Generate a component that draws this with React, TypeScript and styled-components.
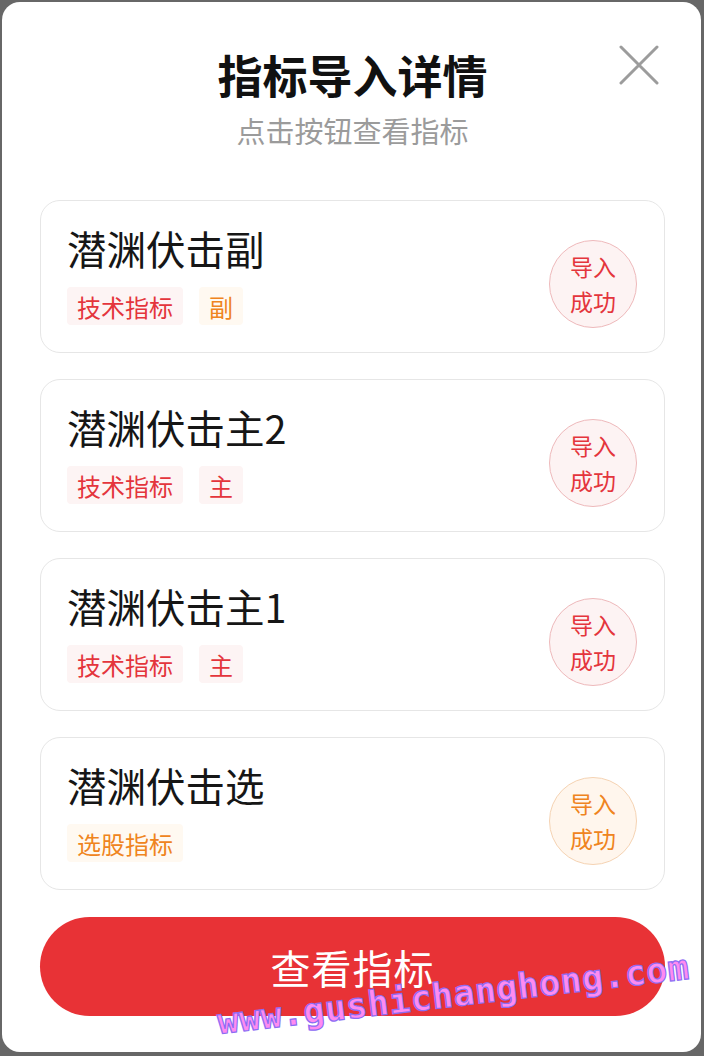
import React from 'react';
import styled, { createGlobalStyle } from 'styled-components';

const GlobalStyle = createGlobalStyle`
    html, body {
        margin: 0;
        padding: 0;
        background: #676767;
    }
    body {
        font-family: "Noto Sans CJK SC", "Noto Sans", sans-serif;
    }
`;

const Backdrop = styled.div`
    width: 704px;
    height: 1056px;
    padding: 2px 3px 4px 2px;
    box-sizing: border-box;
`;

const Modal = styled.div`
    position: relative;
    height: 100%;
    background: #ffffff;
    border-radius: 18px;
    padding: 46px 36px 35px 38px;
    box-sizing: border-box;
    display: flex;
    flex-direction: column;
    overflow: hidden;
`;

const Header = styled.div`
    display: flex;
    flex-direction: column;
    align-items: center;
    margin-bottom: 51px;
`;

const Title = styled.h1`
    margin: 0;
    font-size: 45px;
    line-height: 54px;
    font-weight: 700;
    color: #111111;
`;

const Subtitle = styled.p`
    margin: 9px 0 0;
    font-size: 29px;
    line-height: 38px;
    color: #9b9b9b;
`;

const CloseButton = styled.button`
    position: absolute;
    top: 42px;
    right: 41px;
    width: 42px;
    height: 42px;
    padding: 0;
    border: none;
    background: none;
    display: flex;
    align-items: center;
    justify-content: center;
`;

const CardList = styled.div`
    display: flex;
    flex-direction: column;
    gap: 26px;
`;

const Card = styled.div`
    display: flex;
    align-items: center;
    justify-content: space-between;
    border: 1px solid #e6e6e6;
    border-radius: 20px;
    padding: 23px 26px 27px 26px;
    height: 153px;
    box-sizing: border-box;
`;

const CardInfo = styled.div`
    display: flex;
    flex-direction: column;
`;

const CardTitle = styled.div`
    font-size: 39.5px;
    line-height: 48px;
    color: #161616;
`;

const TagRow = styled.div`
    display: flex;
    gap: 16px;
    margin-top: 15px;
`;

const Tag = styled.span<{ $tone: 'red' | 'orange' }>`
    display: inline-flex;
    align-items: center;
    height: 38px;
    padding: 0 10px;
    border-radius: 4px;
    font-size: 24px;
    color: ${({ $tone }) => ($tone === 'red' ? '#e4353c' : '#ef8420')};
    background: ${({ $tone }) => ($tone === 'red' ? '#fdf4f4' : '#fff9f1')};
`;

const Badge = styled.div<{ $tone: 'red' | 'orange' }>`
    width: 88px;
    height: 88px;
    margin-top: 18px;
    margin-right: 1px;
    border-radius: 50%;
    box-sizing: border-box;
    border: 1px solid ${({ $tone }) => ($tone === 'red' ? '#eeb9bb' : '#f5d3b3')};
    background: ${({ $tone }) => ($tone === 'red' ? '#fdf3f3' : '#fff6ed')};
    color: ${({ $tone }) => ($tone === 'red' ? '#e4353c' : '#ef8420')};
    display: flex;
    flex-direction: column;
    align-items: center;
    justify-content: center;
    font-size: 23px;
    line-height: 35px;
`;

const MainButton = styled.button`
    margin-top: 27px;
    height: 99px;
    border: none;
    border-radius: 50px;
    background: #e83236;
    color: #ffffff;
    font-family: "Noto Sans CJK SC", "Noto Sans", sans-serif;
    font-size: 40px;
    letter-spacing: 1px;
`;

const Watermark = styled.div`
    position: absolute;
    left: 218px;
    top: 1000px;
    transform: rotate(-6.7deg);
    transform-origin: left bottom;
    font-family: "DejaVu Sans Mono", monospace;
    font-size: 35px;
    font-weight: 700;
    letter-spacing: 0.5px;
    color: #ff8bf0;
    -webkit-text-stroke: 1.2px #8c6cf4;
    pointer-events: none;
    white-space: nowrap;
`;

type Tone = 'red' | 'orange';

const items: { name: string; tags: { label: string; tone: Tone }[]; tone: Tone }[] = [
    { name: '潜渊伏击副', tags: [{ label: '技术指标', tone: 'red' }, { label: '副', tone: 'orange' }], tone: 'red' },
    { name: '潜渊伏击主2', tags: [{ label: '技术指标', tone: 'red' }, { label: '主', tone: 'red' }], tone: 'red' },
    { name: '潜渊伏击主1', tags: [{ label: '技术指标', tone: 'red' }, { label: '主', tone: 'red' }], tone: 'red' },
    { name: '潜渊伏击选', tags: [{ label: '选股指标', tone: 'orange' }], tone: 'orange' },
];

export default function App(): JSX.Element {
    return (
        <Backdrop>
            <GlobalStyle />
            <Modal>
                <CloseButton aria-label="关闭">
                    <svg width="40" height="40" viewBox="0 0 40 40">
                        <path d="M2 2 L38 38 M38 2 L2 38" stroke="#9c9c9c" strokeWidth="3" strokeLinecap="round" />
                    </svg>
                </CloseButton>
                <Header>
                    <Title>指标导入详情</Title>
                    <Subtitle>点击按钮查看指标</Subtitle>
                </Header>
                <CardList>
                    {items.map((item) => (
                        <Card key={item.name}>
                            <CardInfo>
                                <CardTitle>{item.name}</CardTitle>
                                <TagRow>
                                    {item.tags.map((t) => (
                                        <Tag key={t.label} $tone={t.tone}>
                                            {t.label}
                                        </Tag>
                                    ))}
                                </TagRow>
                            </CardInfo>
                            <Badge $tone={item.tone}>
                                <span>导入</span>
                                <span>成功</span>
                            </Badge>
                        </Card>
                    ))}
                </CardList>
                <MainButton>查看指标</MainButton>
                <Watermark>www.gushichanghong.com</Watermark>
            </Modal>
        </Backdrop>
    );
}
